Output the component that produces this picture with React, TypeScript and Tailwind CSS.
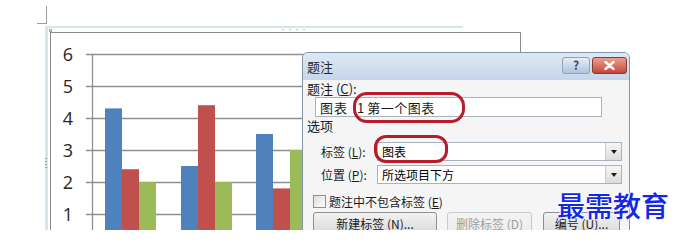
import type { ReactNode } from 'react';

const GRID = [6, 5, 4, 3, 2, 1];
const BAR_W = 17;
// x offsets inside the plot svg, per group: blue, red, green
const GROUPS = [
  { x: 54, values: [4.3, 2.4, 2.0] },
  { x: 130, values: [2.5, 4.4, 2.0] },
  { x: 205, values: [3.5, 1.8, 3.0] },
];
const COLORS = ['#4f81bd', '#c0504d', '#9bbb59'];
const BASE_Y = 213;
const UNIT = 32;

function Chart() {
  return (
    <svg width={468} height={200} className="block">
      {GRID.map((v) => {
        const y = BASE_Y - v * UNIT + 0.5;
        return (
          <g key={v}>
            <line x1={35} x2={462} y1={y} y2={y} stroke="#8f8f8f" strokeWidth={1.3} />
            <text
              x={22}
              y={y + 6.5}
              textAnchor="end"
              fontSize={18}
              fill="#262626"
              fontFamily="'Open Sans', 'Liberation Sans', sans-serif"
            >
              {v}
            </text>
          </g>
        );
      })}
      <line x1={41.5} x2={41.5} y1={21} y2={200} stroke="#8f8f8f" strokeWidth={1.3} />
      {GROUPS.map((g) =>
        g.values.map((v, i) => (
          <rect
            key={`${g.x}-${i}`}
            x={g.x + i * BAR_W}
            y={BASE_Y - v * UNIT}
            width={BAR_W}
            height={v * UNIT}
            fill={COLORS[i]}
          />
        )),
      )}
    </svg>
  );
}

function Key({ k }: { k: string }) {
  return (
    <>
      (<span className="underline">{k}</span>)
    </>
  );
}

function Combo({ children }: { children: ReactNode }) {
  return (
    <div className="flex h-[19px] w-[245px] items-center border border-[#a9b3bd] bg-white">
      <span className="flex-1 pl-[4px] text-[12px] leading-none text-black">{children}</span>
      <span className="flex h-[17px] w-[16px] items-center justify-center border-l border-[#c8cdd2] bg-gradient-to-b from-[#f6f6f6] to-[#dcdcdc]">
        <span className="h-0 w-0 border-x-[3.5px] border-t-[4px] border-x-transparent border-t-[#1a1a1a]" />
      </span>
    </div>
  );
}

function Btn({ children, width, disabled }: { children: ReactNode; width: string; disabled?: boolean }) {
  return (
    <div
      className={`flex h-[23px] items-center justify-center rounded-[3px] border bg-gradient-to-b text-[12px] ${width} ${
        disabled
          ? 'border-[#c9c9c9] from-[#f4f4f4] to-[#ececec] text-[#a0a0a0]'
          : 'border-[#8e8f8f] from-[#f2f2f2] to-[#d9d9d9] text-[#1a1a1a]'
      }`}
    >
      {children}
    </div>
  );
}

function CaptionDialog() {
  return (
    <div className="absolute left-[302px] top-[52px] flex h-[190px] w-[328px] flex-col overflow-hidden rounded-t-[6px] border border-[#8094ab] bg-[#f5f5f5] text-[12px] text-[#1a1a1a]">
      <div className="flex h-[27px] shrink-0 items-center justify-between bg-gradient-to-b from-[#dfe9f4] to-[#c5d6e9] pl-[4px] pr-[2px]">
        <span className="text-[13px] leading-none text-[#1e2a3a]">题注</span>
        <div className="mt-[-3px] flex gap-[2px]">
          <div className="flex h-[17px] w-[28px] items-center justify-center rounded-[3px] border border-[#8da2bb] bg-gradient-to-b from-[#e6eef8] to-[#aec4dd] text-[12px] font-bold leading-none text-[#3b4a5e]">
            ?
          </div>
          <div className="flex h-[17px] w-[35px] items-center justify-center rounded-[3px] border border-[#8b3a32] bg-gradient-to-b from-[#e8a191] to-[#c4443a]">
            <svg width={11} height={9} viewBox="0 0 11 9">
              <path d="M1.5 1 L9.5 8 M9.5 1 L1.5 8" stroke="#ffffff" strokeWidth={2.4} strokeLinecap="round" />
            </svg>
          </div>
        </div>
      </div>
      <div className="flex flex-1 flex-col">
        <div className="h-[16px] pl-[4px] pt-[1px] text-[13px] leading-[16px]">
          题注 <Key k="C" />:
        </div>
        <div className="ml-[12px] mt-[1px] flex h-[20px] w-[287px] items-center border border-[#a9b3bd] bg-white pl-[4px] text-[13px] leading-none">
          <span className="tracking-[1px]">图表</span>
          <span className="ml-[9px]">1</span>
          <span className="ml-[3px] tracking-[0.5px]">第一个图表</span>
        </div>
        <div className="mt-[1px] h-[16px] pl-[4px] text-[13px] leading-[16px]">选项</div>
        <div className="mt-[8px] flex h-[19px] items-center pl-[18px]">
          <span className="w-[56px]">
            标签 <Key k="L" />:
          </span>
          <Combo>图表</Combo>
        </div>
        <div className="mt-[4px] flex h-[19px] items-center pl-[18px]">
          <span className="w-[56px]">
            位置 <Key k="P" />:
          </span>
          <Combo>所选项目下方</Combo>
        </div>
        <div className="mt-[11px] flex h-[13px] items-center pl-[10px]">
          <span className="h-[13px] w-[13px] border border-[#8f8f8f] bg-gradient-to-br from-[#dcdcdc] to-[#ffffff]" />
          <span className="ml-[3px]">
            题注中不包含标签 <Key k="E" />
          </span>
        </div>
        <div className="mt-[4px] flex pl-[10px]">
          <Btn width="w-[124px]">
            新建标签 <Key k="N" />...
          </Btn>
          <div className="ml-[10px]">
            <Btn width="w-[85px]" disabled>
              删除标签 <Key k="D" />
            </Btn>
          </div>
          <div className="ml-[11px]">
            <Btn width="w-[77px]">
              编号 <Key k="U" />...
            </Btn>
          </div>
        </div>
      </div>
    </div>
  );
}

export default function App() {
  return (
    <div className="h-[242px] w-[682px] overflow-hidden bg-white font-['Noto_Sans_CJK_SC','Noto_Sans',sans-serif]">
      <div className="relative h-[230px] overflow-hidden">
        {/* page corner crop mark */}
        <div className="ml-[37px] mt-[6px] h-[18px] w-[10px] border-b border-r border-[#9c9c9c]" />

        {/* chart selection frame */}
        <div className="relative ml-[45px] mt-[2px] h-[210px] w-[418px] border-l-[3px] border-t-[2px] border-[#d4e6ea]">
          <div className="absolute left-[232px] top-[-1px] text-[6px] leading-none tracking-[1px] text-[#9aa]">
            ····
          </div>
          <div className="absolute left-[-3px] top-[130px] flex flex-col gap-[2px]">
            {[0, 1, 2, 3].map((i) => (
              <span key={i} className="h-[1px] w-[2px] bg-[#8aa]" />
            ))}
          </div>
          <div className="absolute left-[1px] top-[1px] h-[3px] w-[3px] border border-[#9aa] bg-[#e5eeee]" />

          <div className="ml-[2px] mt-[4px] h-[200px] w-[471px] border-l border-r border-t border-[#8a8a8a]">
            <Chart />
          </div>
        </div>

        <CaptionDialog />

        {/* red highlight ovals */}
        <div className="absolute left-[353px] top-[92px] h-[31px] w-[112px] rounded-[14px] border-[3px] border-[#b81c2a]" />
        <div className="absolute left-[374px] top-[135px] h-[28px] w-[74px] rounded-[12px] border-[3px] border-[#b81c2a]" />

        {/* watermark */}
        <div className="absolute left-[557px] top-[191px] text-[28px] font-medium leading-none text-[#1626e6] [text-shadow:0_0_2px_#fff,0_0_2px_#fff,0_0_3px_#fff]">
          最需教育
        </div>
      </div>
    </div>
  );
}
